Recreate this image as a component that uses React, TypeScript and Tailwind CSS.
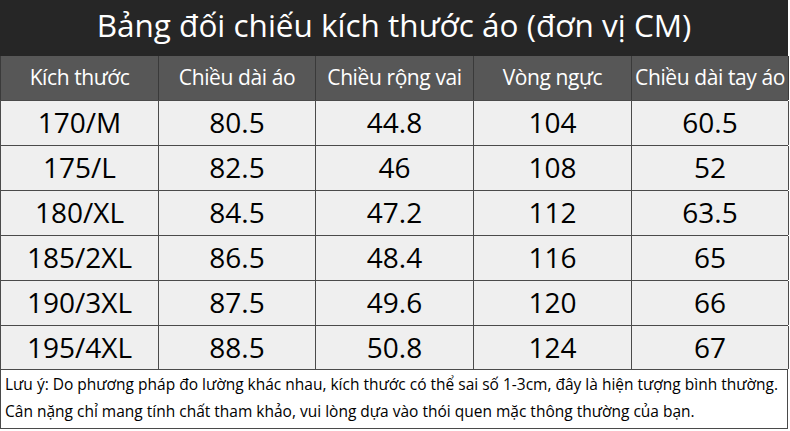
import React from "react";

const header = ["Kích thước", "Chiều dài áo", "Chiều rộng vai", "Vòng ngực", "Chiều dài tay áo"];
const rows = [
  ["170/M", "80.5", "44.8", "104", "60.5"],
  ["175/L", "82.5", "46", "108", "52"],
  ["180/XL", "84.5", "47.2", "112", "63.5"],
  ["185/2XL", "86.5", "48.4", "116", "65"],
  ["190/3XL", "87.5", "49.6", "120", "66"],
  ["195/4XL", "88.5", "50.8", "124", "67"],
];

export default function App() {
  return (
    <div className="w-[790px] h-[431px] bg-white overflow-hidden font-['Open_Sans',sans-serif]">
      <div className="w-[788px] h-[56px] bg-[#262626] flex items-center justify-center text-white text-[31.5px] leading-none pb-[6px] whitespace-nowrap">
        Bảng đối chiếu kích thước áo (đơn vị CM)
      </div>
      <div className="w-[788px] grid grid-cols-[158px_157px_158px_158px_157px] h-[44px] bg-[#575757] border-l border-[#3a3a3a]">
        {header.map((h, i) => (
          <div
            key={i}
            className="flex items-center justify-center text-white text-[21px] whitespace-nowrap border-r border-[#3a3a3a] tracking-[-0.4px]"
          >
            {h}
          </div>
        ))}
      </div>
      {rows.map((r, ri) => (
        <div
          key={ri}
          className={`w-[788px] grid grid-cols-[158px_157px_158px_158px_157px] bg-[#efefef] border-l border-t border-[#4a4a4a] ${ri === rows.length - 1 ? "h-[44px]" : "h-[45px]"}`}
        >
          {r.map((c, ci) => (
            <div
              key={ci}
              className="flex items-center justify-center text-black text-[28px] leading-none border-r border-[#4a4a4a] pb-[2px]"
            >
              {c}
            </div>
          ))}
        </div>
      ))}
      <div className="w-[788px] h-[60px] border border-[#4a4a4a] bg-white px-[4px] pt-[1px] text-[15.5px] leading-[27px] text-black whitespace-nowrap">
        <div>Lưu ý: Do phương pháp đo lường khác nhau, kích thước có thể sai số 1-3cm, đây là hiện tượng bình thường.</div>
        <div>Cân nặng chỉ mang tính chất tham khảo, vui lòng dựa vào thói quen mặc thông thường của bạn.</div>
      </div>
    </div>
  );
}
